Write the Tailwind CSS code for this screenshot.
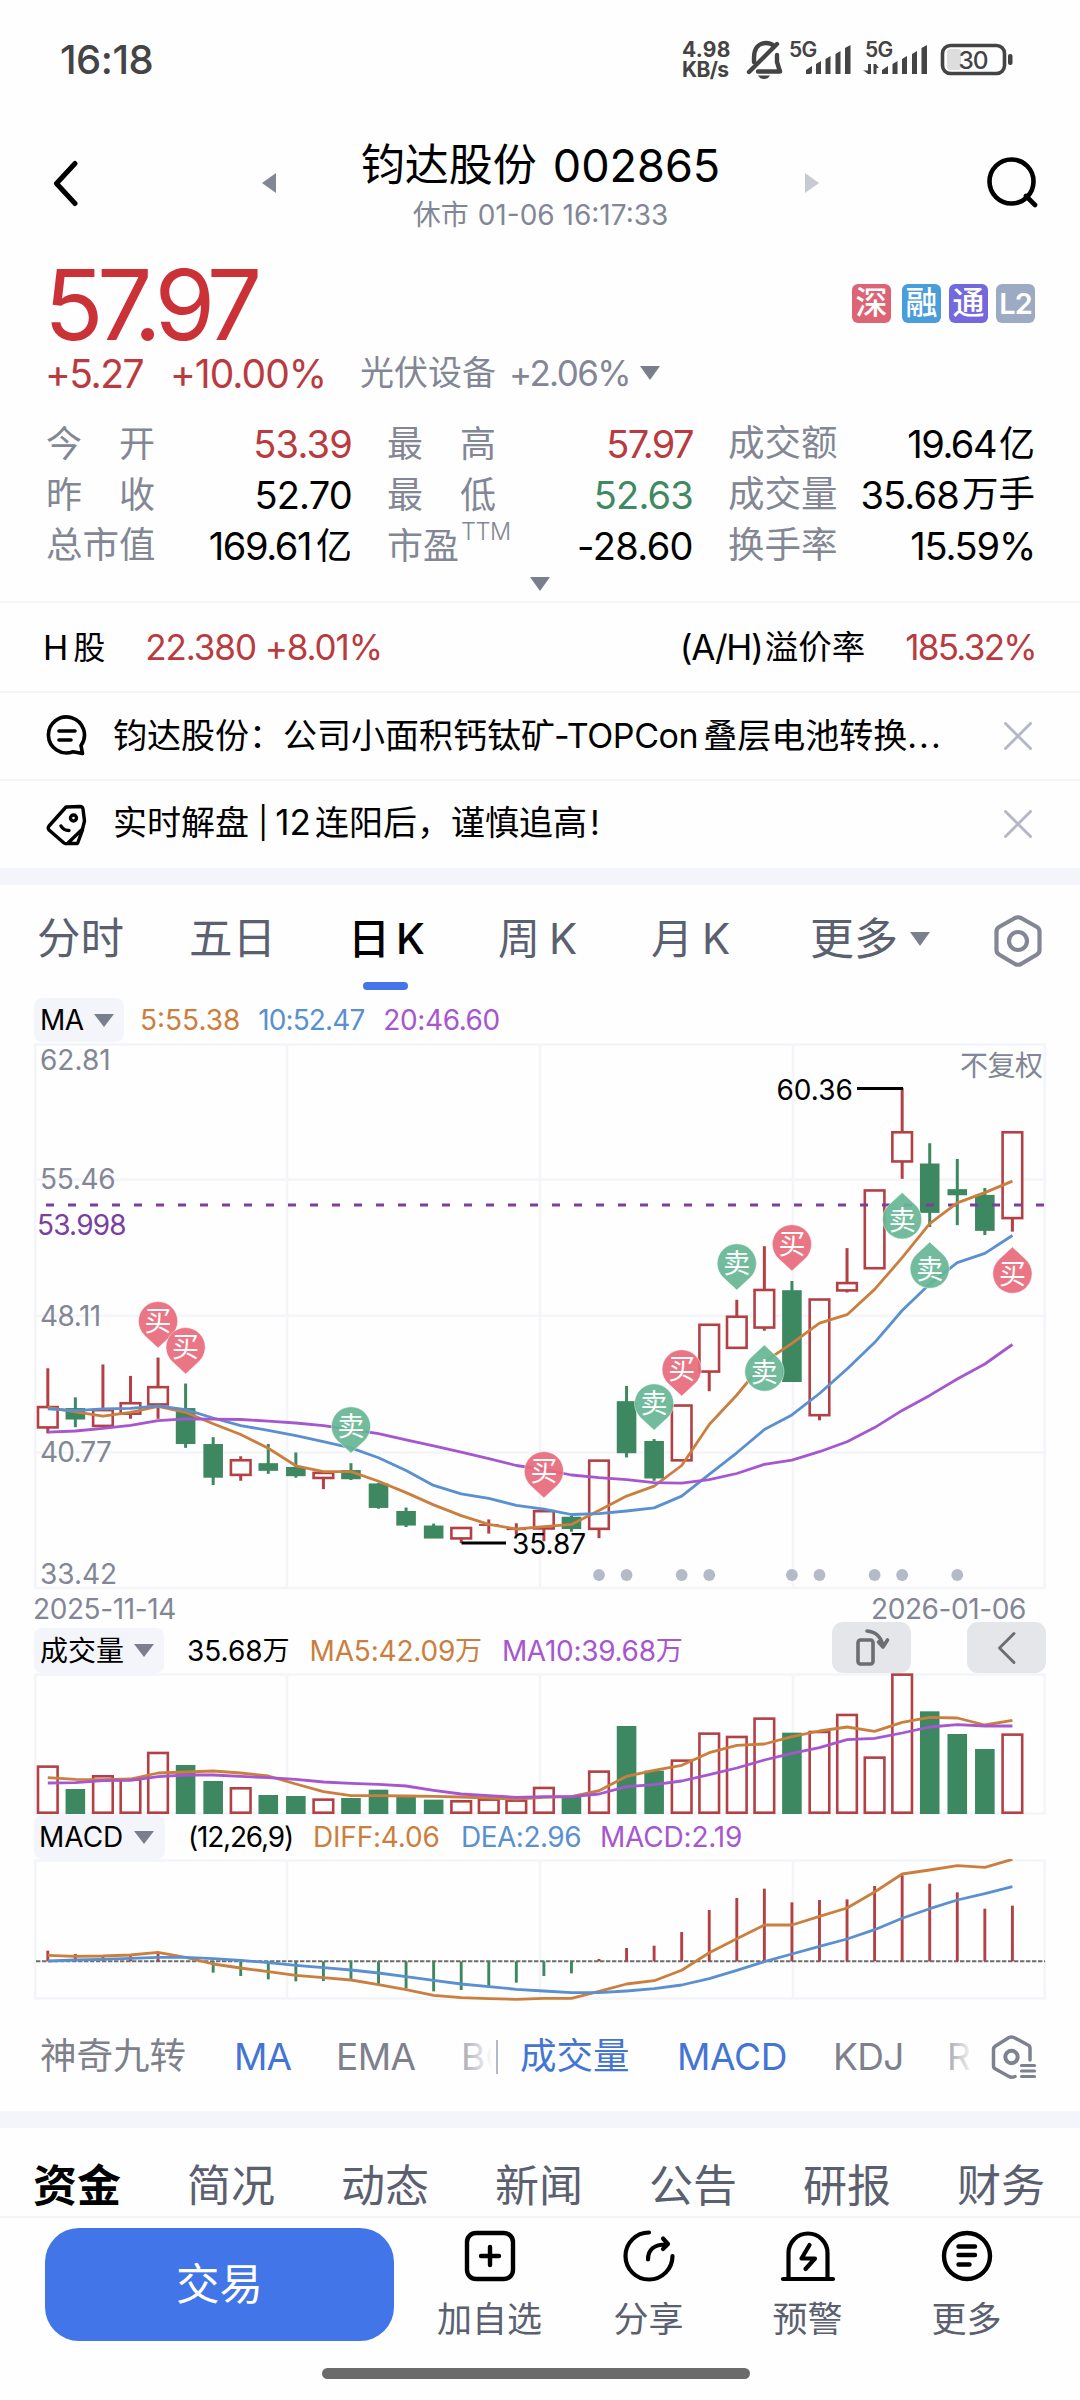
<!DOCTYPE html>
<html lang="zh-CN">
<head>
<meta charset="utf-8">
<title>钧达股份 002865</title>
<script src="https://cdn.jsdelivr.net/npm/@tailwindcss/browser@4"></script>
</head>
<body class="w-[1080px] h-[2400px] overflow-hidden bg-[#fefefe] text-black whitespace-nowrap font-['Inter','Noto_Sans_CJK_SC',sans-serif] leading-none">

<!-- status bar -->
<div class="flex h-[119px] items-center justify-between pl-[60px] pr-[63px] text-[#444]">
  <div class="text-[40px] font-medium tracking-[-0.500px]">16:18</div>
  <div class="flex items-center">
    <div class="w-[59px] text-[21px] font-bold leading-[20px] text-[#444]"><div class="tracking-[0.3px]">4.98</div><div class="tracking-[-0.6px]">KB/s</div></div>
    <svg class="h-[60px] w-[276px] text-[#444]" viewBox="740 30 276 60" fill="none" stroke="currentColor" stroke-width="4.4" stroke-linecap="round" stroke-linejoin="round">
      <path d="M753 62V58C753 48 758 43 765 43C768 43 771 44 773 46M776 55V62L779 71.500H757M748 72L776 44"/>
      <path d="M757 75.500H769Q767 79 763 79Q759 79 757 75.500Z" fill="currentColor" stroke="none"/>
      <g fill="currentColor" stroke="none">
        <path d="M805 74V70L811 66V72Q811 74 809 74ZM815 74V64L820 61V74ZM824.500 74V59L829.500 56V74ZM834.500 74V54L839.500 51V74ZM844 74V48L849.500 45V74Z"/>
        <path d="M881 74V70L887 66V74ZM891.500 74V64L896.500 61V74ZM901 74V59L906 56V74ZM911 74V54L916 51V74ZM920.500 74V48L926 45V74Z"/>
        <path d="M867 64H870V74H867Q864 71 862 70.500H867ZM872.500 64H875Q877 67 878 68H875.500V74H872.500Z"/>
        <rect x="946" y="49" width="14" height="21" rx="3" fill="#ddd"/>
        <rect x="1007" y="54" width="4.500" height="11" rx="2"/>
        <text x="788" y="57" font-size="21" font-weight="600" letter-spacing="-0.8">5G</text>
        <text x="864" y="57" font-size="21" font-weight="600" letter-spacing="-0.8">5G</text>
        <text x="957.500" y="68.500" font-size="24.500" font-weight="500" letter-spacing="-1">30</text>
      </g>
      <rect x="941.500" y="45.500" width="62" height="28" rx="8" stroke-width="3.600"/>
    </svg>
  </div>
</div>

<!-- title -->
<div class="flex h-[136px] items-start pl-[52px] pr-[42px]">
  <svg class="mt-[41px] h-[48px] w-[28px]" viewBox="0 0 28 48" fill="none" stroke="#000" stroke-width="5" stroke-linecap="round" stroke-linejoin="round"><path d="M23 3.500L4.500 23.500L23 43.500"/></svg>
  <div class="ml-[182px] flex flex-1 items-start">
    <svg class="mt-[54px] h-[20px] w-[14px]" viewBox="0 0 14 20"><path d="M14 0V20L0 10Z" fill="#838795"/></svg>
    <div class="flex w-[529px] flex-col items-center pt-[21px]">
      <div class="flex h-[50px] items-center text-[45px]"><span class="text-[44px] font-normal">钧达股份</span><span class="ml-[16px]">002865</span></div>
      <div class="flex h-[49px] items-center text-[28px] text-[#838795]"><span>休市</span><span class="ml-[9px]">01-06 16:17:33</span></div>
    </div>
    <svg class="mt-[54px] h-[20px] w-[14px]" viewBox="0 0 14 20"><path d="M0 0V20L14 10Z" fill="#c8cad1"/></svg>
  </div>
  <svg class="mt-[37px] h-[54px] w-[52px]" viewBox="986 156 52 54" fill="none" stroke="#000" stroke-width="4.600" stroke-linecap="round"><circle cx="1011.500" cy="181.500" r="22"/><path d="M1026 196L1035 205"/></svg>
</div>

<!-- price -->
<div class="flex h-[100px] items-center justify-between pl-[44px] pr-[45px]">
  <div class="text-[98px] tracking-[-6.600px] text-[#cb3238]">57.97</div>
  <div class="flex items-center pb-[4px] text-[32px] font-medium text-white">
    <div class="flex size-[39px] items-center justify-center rounded-[6px] bg-[#dc6474]">深</div>
    <div class="ml-[11px] flex size-[39px] items-center justify-center rounded-[6px] bg-[#4a9ddb]">融</div>
    <div class="ml-[8px] flex size-[39px] items-center justify-center rounded-[6px] bg-[#7468dd]">通</div>
    <div class="ml-[8px] flex size-[39px] items-center justify-center rounded-[6px] bg-[#9caac3] text-[29px] font-semibold tracking-[-1px]">L2</div>
  </div>
</div>
<div class="flex h-[36px] items-center pl-[45px] text-[39px] text-[#b93b40]">
  <span class="w-[125px] tracking-[-1.500px]">+5.27</span><span class="w-[190px] tracking-[-1px]">+10.00%</span>
  <span class="w-[149px] text-[34px] text-[#838795]">光伏设备</span><span class="text-[35px] tracking-[-1.600px] text-[#838795]">+2.06%</span>
  <svg class="ml-[10px] h-[14px] w-[20px]" viewBox="0 0 20 14"><path d="M0 0H20L10 14Z" fill="#7b7f8d"/></svg>
</div>

<!-- figures -->
<div class="mt-[27px] grid grid-cols-[306px_306px_307px] gap-x-[35px] gap-y-0 pl-[46px] text-[38px]">
  <div class="flex h-[51px] items-center justify-between"><span class="flex w-[109px] justify-between text-[36px] text-[#838795]"><i class="not-italic">今</i><i class="not-italic">开</i></span><span class="tracking-[-0.800px] text-[#b93b40]">53.39</span></div>
  <div class="flex h-[51px] items-center justify-between"><span class="flex w-[109px] justify-between text-[36px] text-[#838795]"><i class="not-italic">最</i><i class="not-italic">高</i></span><span class="tracking-[-1.600px] text-[#b93b40]">57.97</span></div>
  <div class="flex h-[51px] items-center justify-between"><span class="text-[36.500px] text-[#838795]">成交额</span><span class="flex items-center tracking-[-1.500px]">19.64<b class="ml-[3px] text-[36px] font-normal tracking-normal">亿</b></span></div>
  <div class="flex h-[51px] items-center justify-between"><span class="flex w-[109px] justify-between text-[36px] text-[#838795]"><i class="not-italic">昨</i><i class="not-italic">收</i></span><span class="tracking-[-0.800px]">52.70</span></div>
  <div class="flex h-[51px] items-center justify-between"><span class="flex w-[109px] justify-between text-[36px] text-[#838795]"><i class="not-italic">最</i><i class="not-italic">低</i></span><span class="tracking-[-0.800px] text-[#3f8963]">52.63</span></div>
  <div class="flex h-[51px] items-center justify-between"><span class="text-[36.500px] text-[#838795]">成交量</span><span class="flex items-center tracking-[-0.800px]">35.68<b class="ml-[3px] text-[36.500px] font-normal tracking-normal">万手</b></span></div>
  <div class="flex h-[51px] items-center justify-between"><span class="text-[36.500px] text-[#838795]">总市值</span><span class="flex items-center tracking-[-1.400px]">169.61<b class="ml-[5px] text-[36px] font-normal tracking-normal">亿</b></span></div>
  <div class="flex h-[51px] items-center justify-between"><span class="flex items-center text-[36px] text-[#838795]">市盈<sup class="top-0 mb-[27px] ml-[2px] text-[23.500px] font-light leading-none tracking-[-0.500px]">TTM</sup></span><span class="tracking-[-0.600px]">-28.60</span></div>
  <div class="flex h-[51px] items-center justify-between"><span class="text-[36.500px] text-[#838795]">换手率</span><span class="tracking-[-1.200px]">15.59%</span></div>
</div>
<div class="flex h-[32px] justify-center border-b-2 border-[#f5f6f9] pt-[6px]">
  <svg class="h-[14px] w-[20px]" viewBox="0 0 20 14"><path d="M0 0H20L10 14Z" fill="#7b7f8d"/></svg>
</div>

<!-- H share -->
<div class="flex h-[90px] items-center justify-between border-b-2 border-[#f5f6f9] pl-[43px] pr-[44px] pt-px text-[35px]">
  <div class="flex items-center"><span class="text-[34px]">H</span><span class="ml-[5px] text-[32px]">股</span><span class="ml-[40px] tracking-[-1.100px] text-[#b93b40]">22.380 +8.01%</span></div>
  <div class="flex items-center"><span class="tracking-[-1.200px]">(A/H)</span><span class="ml-[2px] text-[33.500px]">溢价率</span><span class="ml-[40px] tracking-[-1.700px] text-[#b93b40]">185.32%</span></div>
</div>

<!-- notices -->
<div class="flex h-[88px] items-center border-b-2 border-[#f5f6f9] pl-[46px] pr-[48px] text-[34px]">
  <svg class="h-[42px] w-[42px]" viewBox="0 0 42 42" fill="none" stroke="#000" stroke-width="3.600" stroke-linecap="round" stroke-linejoin="round"><path d="M36.500 38.500L27 36.700A18 18 0 1 1 35 30.500ZM13 16H29M13 25H25"/></svg>
  <div class="ml-[25px] flex flex-1 items-center">钧达股份：公司小面积钙钛矿<span class="ml-[-1px] tracking-[-0.400px]">-TOPCon</span><span class="ml-[5px]">叠层电池转换</span><span class="tracking-[2px]">...</span></div>
  <svg class="h-[28px] w-[28px]" viewBox="0 0 28 28" stroke="#b4b8c7" stroke-width="3" stroke-linecap="round"><path d="M1.500 1.500L26.500 26.500M26.500 1.500L1.500 26.500"/></svg>
</div>
<div class="flex h-[87px] items-center pl-[46px] pr-[48px] text-[34px]">
  <svg class="h-[42px] w-[42px]" viewBox="0 0 42 42" fill="none" stroke="#000" stroke-width="3.400" stroke-linecap="round" stroke-linejoin="round"><path d="M20 3L34 2.500Q36.500 2.500 37 5L38.500 17L36.500 25L22 39Q20 40.500 18 39L3 26Q1.500 24 3 22ZM36.500 26L31.500 39.500H22M15 22Q17.500 26.500 23 26.500"/><circle cx="27.500" cy="14" r="3"/></svg>
  <div class="ml-[25px] flex flex-1 items-center pb-[4px]">实时解盘<span class="ml-[9px] mr-[7px] text-[31px]">|</span><span class="mr-[4px] text-[35px]">12</span>连阳后，谨慎追高<span class="ml-[3px]">!</span></div>
  <svg class="mb-[2px] h-[28px] w-[28px]" viewBox="0 0 28 28" stroke="#b4b8c7" stroke-width="3" stroke-linecap="round"><path d="M1.500 1.500L26.500 26.500M26.500 1.500L1.500 26.500"/></svg>
</div>
<div class="h-[17px] bg-[#f4f5fa]"></div>

<!-- period tabs -->
<div class="flex h-[113px] items-center pb-[6px] pl-[37px] text-[42px] text-[#5b6070]">
  <div class="w-[152px] text-[43.500px]">分时</div>
  <div class="w-[159px] text-[43.500px]">五日</div>
  <div class="relative flex w-[150px] items-center font-medium text-black">日<span class="ml-[6px]">K</span><span class="absolute left-[15px] top-[64px] h-[8px] w-[45px] rounded-full bg-[#4175e8]"></span></div>
  <div class="flex w-[153px] items-center">周<span class="ml-[9px]">K</span></div>
  <div class="flex w-[159px] items-center">月<span class="ml-[9px]">K</span></div>
  <div class="flex flex-1 items-center text-[44px]">更多<svg class="ml-[12px] h-[14px] w-[20px]" viewBox="0 0 20 14"><path d="M0 0H20L10 14Z" fill="#7b7f8d"/></svg></div>
  <svg class="mr-[36px] mt-[5px] h-[54px] w-[52px]" viewBox="0 0 52 54" fill="none" stroke="#838795" stroke-width="4.200" stroke-linejoin="round"><path d="M23 4Q26 2.500 29 4L45 13Q47.500 14.500 47.500 17.500V36Q47.500 39 45 40.500L29 50Q26 51.500 23 50L7 40.500Q4.500 39 4.500 36V17.500Q4.500 14.500 7 13Z"/><circle cx="26" cy="27" r="9"/></svg>
</div>

<!-- MA legend -->
<div class="flex h-[44px] items-center pl-[34px] text-[28px]">
  <div class="flex h-[44px] w-[90px] items-center rounded-[8px] bg-[#f4f5fa] pl-[6px]"><span class="tracking-[-0.500px]">MA</span><svg class="ml-[10px] h-[13px] w-[20px]" viewBox="0 0 20 13"><path d="M0 0H20L10 13Z" fill="#7b7f8d"/></svg></div>
  <span class="ml-[16px] text-[#cb7f3e]">5:55.38</span>
  <span class="ml-[18px] tracking-[-0.900px] text-[#5a8fd0]">10:52.47</span>
  <span class="ml-[19px] tracking-[-0.400px] text-[#a656cf]">20:46.60</span>
</div>

<svg id="price" class="block h-[548px] w-[1080px]" viewBox="0 1042 1080 548"></svg>

<div class="flex h-[37px] items-center justify-between pl-[33px] pr-[54px] text-[28px] tracking-[-0.400px] text-[#838795]"><span>2025-11-14</span><span>2026-01-06</span></div>

<!-- volume legend -->
<div class="flex h-[46px] items-end pl-[34px] pr-[34px] text-[28px]">
  <div class="flex h-[45px] w-[130px] items-center rounded-[8px] bg-[#f4f5fa] pl-[6px]">成交量<svg class="ml-[10px] h-[13px] w-[20px]" viewBox="0 0 20 13"><path d="M0 0H20L10 13Z" fill="#7b7f8d"/></svg></div>
  <div class="flex h-[45px] flex-1 items-center">
    <span class="ml-[23px] flex items-center">35.68<b class="text-[27px] font-normal">万</b></span>
    <span class="ml-[20px] flex items-center tracking-[-0.200px] text-[#cb7f3e]">MA5:42.09<b class="text-[27px] font-normal">万</b></span>
    <span class="ml-[20px] flex items-center tracking-[-0.300px] text-[#a656cf]">MA10:39.68<b class="text-[27px] font-normal">万</b></span>
  </div>
  <div class="flex h-[51px] w-[79px] shrink-0 items-center justify-center rounded-[11px] bg-[#e5e6ea]">
    <svg class="h-[40px] w-[36px]" viewBox="0 0 36 40" fill="none" stroke="#6d6e72" stroke-width="3.600" stroke-linecap="round" stroke-linejoin="round"><rect x="4" y="12" width="15" height="24" rx="2.500"/><path d="M13 3Q26 4 29 18M24.500 14L29 19L33.500 12"/></svg>
  </div>
  <div class="ml-[56px] flex h-[51px] w-[79px] shrink-0 items-center justify-center rounded-[11px] bg-[#e5e6ea]">
    <svg class="h-[34px] w-[20px]" viewBox="0 0 20 34" fill="none" stroke="#6d6e72" stroke-width="3" stroke-linecap="round" stroke-linejoin="round"><path d="M17 2.500L2.500 17L17 31.500"/></svg>
  </div>
</div>

<svg id="volume" class="block h-[142px] w-[1080px]" viewBox="0 1673 1080 142"></svg>

<!-- MACD legend -->
<div class="flex h-[44px] items-center pl-[34px] text-[28px]">
  <div class="flex h-[44px] w-[131px] items-center rounded-[8px] bg-[#f4f5fa] pl-[5px]">MACD<svg class="ml-[11px] h-[13px] w-[20px]" viewBox="0 0 20 13"><path d="M0 0H20L10 13Z" fill="#7b7f8d"/></svg></div>
  <span class="ml-[23px] w-[125px] tracking-[-1.200px]">(12,26,9)</span>
  <span class="w-[148px] tracking-[-0.200px] text-[#cb7f3e]">DIFF:4.06</span>
  <span class="w-[139px] tracking-[-0.500px] text-[#5a8fd0]">DEA:2.96</span>
  <span class="tracking-[-0.200px] text-[#a656cf]">MACD:2.19</span>
</div>

<svg id="macd" class="block h-[142px] w-[1080px]" viewBox="0 1859 1080 142"></svg>

<!-- indicator picker -->
<div class="flex h-[110px] items-center pl-[40px] pt-px text-[37px] text-[#7e818c]">
  <div class="w-[194px] text-[36.500px]">神奇九转</div>
  <div class="w-[102px] tracking-[-1px] text-[#4474d4]">MA</div>
  <div class="w-[125px] tracking-[-0.600px]">EMA</div>
  <div class="relative h-[44px] w-[35px] overflow-hidden leading-[44px]">BOLL<span class="absolute inset-0 bg-linear-to-r from-white/30 to-[#fefefe] to-90%"></span></div>
  <div class="h-[34px] w-[2px] bg-[#b4b8c7]"></div>
  <div class="ml-[22px] w-[157px] text-[36.500px] text-[#4474d4]">成交量</div>
  <div class="w-[156px] tracking-[-0.300px] text-[#4474d4]">MACD</div>
  <div class="w-[114px] tracking-[-0.600px]">KDJ</div>
  <div class="relative h-[44px] w-[28px] overflow-hidden leading-[44px]">RSI<span class="absolute inset-0 bg-linear-to-r from-white/30 to-[#fefefe]"></span></div>
  <svg class="ml-[14px] h-[48px] w-[52px]" viewBox="990 2033 52 48" fill="none" stroke="#7e8290" stroke-width="3.500" stroke-linecap="round" stroke-linejoin="round"><path d="M1031 2060V2048Q1031 2046 1029 2045L1015 2037.500Q1012.500 2036.500 1010 2037.500L996.500 2046Q994.500 2047.500 994.500 2049V2066Q994.500 2068 996.500 2069L1010 2076.500Q1012.500 2078 1016 2076.500"/><circle cx="1012.500" cy="2057" r="6.200" stroke-width="4"/><path d="M1022.500 2065.500H1035.500M1022.500 2071H1035.500M1022.500 2076.500H1035.500" stroke-width="3.200"/></svg>
</div>
<div class="h-[17px] bg-[#f4f5fa]"></div>

<!-- info tabs -->
<div class="flex h-[88px] items-center pl-[33px] pt-[28px] text-[44px] text-[#5b6070]">
  <div class="w-[154px] font-bold text-black">资金</div><div class="w-[154px]">简况</div><div class="w-[154px]">动态</div><div class="w-[154px]">新闻</div><div class="w-[154px]">公告</div><div class="w-[154px]">研报</div><div>财务</div>
</div>

<!-- bottom bar -->
<div class="flex h-[145px] items-start border-t-2 border-[#f3f4f7] pl-[45px] pt-[10px] text-[35px] text-[#5b6070]">
  <div class="mr-[16px] flex h-[113px] w-[349px] items-center justify-center rounded-[34px] bg-[#4175e8] text-[43.500px] text-white">交易</div>
  <div class="flex w-[159px] flex-col items-center pt-[1px]">
    <svg class="h-[54px] w-[60px]" viewBox="-30 -27 60 54" fill="none" stroke="#000" stroke-width="4.400" stroke-linecap="round"><rect x="-23" y="-23" width="46" height="46" rx="9"/><path d="M-9 0H9M0 -9V9"/></svg>
    <span class="mt-[19px]">加自选</span>
  </div>
  <div class="flex w-[159px] flex-col items-center pt-[1px]">
    <svg class="h-[54px] w-[60px]" viewBox="-30 -27 60 54" fill="none" stroke="#000" stroke-width="4.200" stroke-linecap="round" stroke-linejoin="round"><path d="M0 -23.500A23.500 23.500 0 1 0 23.500 0M-1 3.500Q-1 -11.500 17 -11.500M14 -17.500L19 -12L14 -7"/></svg>
    <span class="mt-[19px]">分享</span>
  </div>
  <div class="flex w-[159px] flex-col items-center pt-[1px]">
    <svg class="h-[54px] w-[60px]" viewBox="-30 -27 60 54" fill="none" stroke="#000" stroke-width="4.200" stroke-linecap="round" stroke-linejoin="round"><path d="M-19.500 22V-3A19.500 19.500 0 0 1 19.500 -3V22M-25 23H25M1.500 -11L-6.500 2.500H7L-2.500 13"/></svg>
    <span class="mt-[19px]">预警</span>
  </div>
  <div class="flex w-[159px] flex-col items-center pt-[1px]">
    <svg class="h-[54px] w-[60px]" viewBox="-30 -27 60 54" fill="none" stroke="#000" stroke-width="4.400" stroke-linecap="round"><circle r="23"/><path d="M-8.500 -9.500H8M-8.500 -1H8M-8.500 8.500H2.500"/></svg>
    <span class="mt-[19px]">更多</span>
  </div>
</div>
<div class="ml-[322px] mt-[7px] h-[11px] w-[428px] rounded-full bg-[#6b6b6b]"></div>

<script>
const RED = '#b34045', GREEN = '#3d8860', ORANGE = '#cb7f3e', BLUE = '#5a8fd0', PURPLE = '#a656cf', GREY = '#838795', GRID = '#f4f5f9';
const x = i => +(47.8 + i * 27.56).toFixed(2);
const wrap = (id, s) => { document.getElementById(id).innerHTML = s; };
const line = (x1, y1, x2, y2, c, w, extra = '') => `<line x1="${x1}" y1="${y1}" x2="${x2}" y2="${y2}" stroke="${c}" stroke-width="${w}" ${extra}/>`;
const poly = (vals, f, c) => `<polyline fill="none" stroke="${c}" stroke-width="2.8" stroke-linejoin="round" points="${vals.map((v, i) => x(i) + ',' + f(v).toFixed(1)).join(' ')}"/>`;
const text = (s, tx, ty, c, extra = '') => `<text x="${tx}" y="${ty}" font-size="28" fill="${c}" ${extra}>${s}</text>`;
const frame = (top, bottom, rows = []) => `<rect x="35.3" y="${top}" width="1009.500" height="${bottom - top}" fill="none" stroke="${GRID}" stroke-width="2.6"/>`
  + [287, 540, 793].map(v => line(v, top, v, bottom, GRID, 2.6)).join('') + rows.map(r => line(35, r, 1045, r, GRID, 2.6)).join('');

/* daily candles: up/down, high, body top, body bottom, low */
const K = [
 ['r',910,1008,1068,1080],['g',986,1014,1044,1064],['r',900,1016,1064,1064],['r',930,998,1032,1042],['r',882,956,1008,1042],['g',950,1014,1108,1118],
 ['g',1090,1108,1196,1215],['r',1140,1147,1192,1204],['g',1108,1158,1178,1186],['g',1130,1168,1192,1196],['r',1178,1180,1200,1226],['g',1158,1176,1200,1202],
 ['g',1210,1211,1275,1277],['g',1274,1283,1321,1325],['g',1316,1321,1355,1355],['r',1324,1324,1358,1367],['r',1305,1317,1322,1342],['r',1315,1328,1333,1345],
 ['r',1275,1280,1332,1362],['g',1295,1298,1330,1337],['r',1148,1148,1333,1354],['g',956,996,1132,1143],['g',1095,1100,1198,1204],['r',1004,1004,1154,1154],
 ['r',793,793,922,970],['r',731,772,860,860],['r',591,702,807,812],['g',682,706,946,946],['r',727,727,1036,1046],['r',596,684,710,712],
 ['r',442,442,652,652],['r',178,290,373,415],['g',322,375,504,541],['g',363,442,458,536],['g',439,457,551,562],['r',290,290,521,553]];
const py = v => 1020 + v / 2.613;
let s = frame(1044.500, 1588, [1179.600, 1315.800, 1452.500]);
s += text('不复权', 960, 1076, GREY, 'letter-spacing="-0.5"');
K.forEach(([k, h, t, b, l], i) => {
  const c = k === 'r' ? RED : GREEN, X = x(i);
  if (h < t) s += line(X, py(h), X, py(t) + 1, c, 3);
  if (l > b) s += line(X, py(b) - 1, X, py(l), c, 3);
  const H = py(b) - py(t);
  if (k === 'g' || H < 4) s += `<rect x="${X - 9.8}" y="${py(t)}" width="19.600" height="${H}" fill="${c}"/>`;
  else s += `<rect x="${X - 9.8}" y="${py(t) + 1.3}" width="19.600" height="${H - 2.6}" fill="#fefefe" stroke="${c}" stroke-width="2.6"/>`;
});
s += line(46, 1205, 1045, 1205, '#7b3f9d', 2.8, 'stroke-dasharray="8 14"');
s += poly([1012,1024,1035,1025,1010,1025,1055,1083,1119,1165,1180,1180,1205,1235,1267,1295,1318,1330,1324,1318,1282,1244,1218,1164,1057,980,893,845,792,770,704,621,532,478,451,421], py, ORANGE);
s += poly([1016,1021,1016,1015,1008,1018,1040,1060,1072,1086,1102,1118,1144,1177,1216,1238,1250,1268,1278,1292,1290,1283,1275,1244,1187,1131,1070,1032,976,912,843,759,690,634,610,563], py, BLUE);
s += poly([1077,1074,1067,1059,1047,1042,1043,1044,1048,1053,1060,1070,1081,1097,1113,1129,1146,1164,1175,1189,1196,1201,1209,1210,1201,1185,1161,1150,1128,1102,1065,1020,981,938,899,848], py, PURPLE);
[['62.81',40,1069.7,GREY],['55.46',40,1188.8,GREY,'letter-spacing="-0.3"'],['53.998',37,1234.7,'#7b3f9d','letter-spacing="-0.8"'],['48.11',40,1325.8,GREY,'letter-spacing="-0.5"'],['40.77',40,1462,GREY,'letter-spacing="-0.8"'],['33.42',40,1584,GREY]].forEach(a => s += text(...a));
s += text('60.36', 776.500, 1099.500, '#000') + line(857, 1088.500, 903, 1088.500, '#000', 2.8);
s += text('35.87', 512, 1554, '#000') + line(461.500, 1543, 506, 1543, '#000', 2.8);
[20,21,23,24,27,28,30,31,33].forEach(i => s += `<circle cx="${x(i)}" cy="1575" r="5.900" fill="#b5bac8"/>`);
/* trade markers: day, buy or sell, top edge, pin direction */
[[4,'买',734,1],[5,'买',802,1],[11,'卖',1009,1],[18,'买',1126,1],[22,'卖',949,1],[23,'买',860,1],[25,'卖',583,1],[27,'买',533,1],[26,'卖',849,-1],[31,'卖',451,-1],[32,'卖',580,-1],[35,'买',593,-1]].forEach(([i, ch, t, d]) => {
  const top = py(t), cy = d > 0 ? top + 20 : top + 27, X = x(i);
  s += `<g transform="translate(${X} ${cy})"><path transform="scale(1 ${d})" d="M0 27L-13.500 14.500A19.600 19.600 0 1 1 13.500 14.500Z" fill="${ch === '买' ? '#e8697a' : '#66b695'}" fill-opacity="0.92" stroke="#fff" stroke-opacity="0.6" stroke-width="0.8"/><text y="10" text-anchor="middle" font-size="27" fill="#fff">${ch}</text></g>`;
});
wrap('price', s);

/* volume */
const V = [496,567,525,535,455,495,543,561,585,588,595,594,569,588,599,600,595,598,560,588,511,378,512,478,397,407,352,398,392,341,469,220,334,402,447,400];
const vy = v => 1600 + v / 3;
s = frame(1674.500, 1813.500);
V.forEach((v, i) => {
  const X = x(i), t = vy(v), H = 1814 - t;
  s += K[i][0] === 'g' ? `<rect x="${X - 9.8}" y="${t}" width="19.600" height="${H}" fill="${GREEN}"/>`
    : `<rect x="${X - 9.8}" y="${t + 1.3}" width="19.600" height="${H - 2.6}" fill="#fefefe" stroke="${RED}" stroke-width="2.6"/>`;
});
s += poly([533,538,539,537,519,516,513,519,528,552,575,587,587,588,589,591,594,597,592,590,572,529,511,496,458,436,432,410,393,381,394,367,352,354,375,361], vy, ORANGE);
s += poly([549,548,542,541,530,525,525,529,533,538,546,550,553,558,571,582,587,592,590,590,582,560,554,543,524,504,480,460,443,419,415,399,381,374,378,378], vy, PURPLE);
wrap('volume', s);

/* MACD */
const M = [1052,1062,1070,1066,1060,1084,1118,1128,1138,1144,1143,1138,1152,1165,1174,1170,1160,1148,1128,1120,1077,1044,1037,996,930,894,866,907,900,898,858,826,851,877,926,917];
s = frame(1860.500, 1998.500);
s += line(36, 1961.300, 1045, 1961.300, '#6d6d6d', 2, 'stroke-dasharray="4.4 1.6"');
M.forEach((v, i) => { s += line(x(i), 1961.300, x(i), vy(v), v > 1084 ? GREEN : RED, 2.9); });
s += poly([1066,1069,1068,1065,1057,1072,1092,1104,1115,1126,1133,1140,1154,1169,1186,1193,1196,1198,1195,1195,1174,1152,1142,1111,1058,1016,975,975,949,924,876,822,810,797,802,778], vy, ORANGE);
s += poly([1083,1080,1078,1075,1072,1072,1076,1081,1088,1096,1103,1110,1119,1130,1141,1152,1160,1168,1173,1178,1178,1173,1166,1155,1136,1111,1085,1062,1039,1017,989,955,926,900,881,860], vy, BLUE);
wrap('macd', s);
</script>
</body>
</html>
